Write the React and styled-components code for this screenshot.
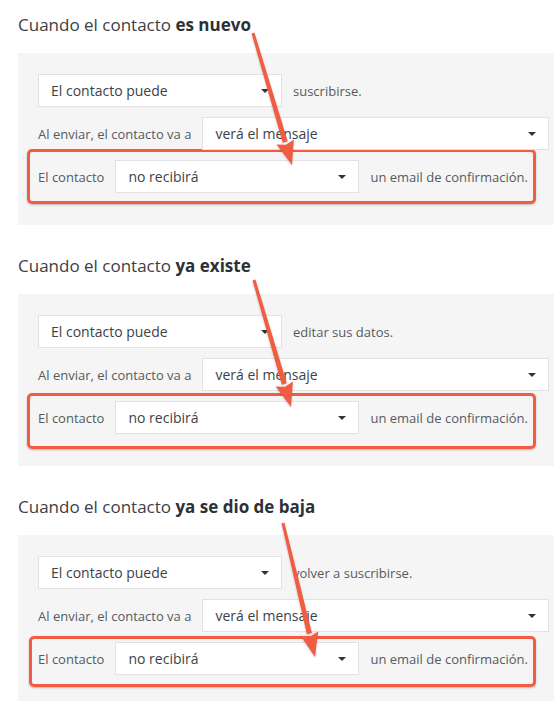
import styled, { createGlobalStyle } from "styled-components";

const GlobalStyle = createGlobalStyle`
  body {
    margin: 0;
    background: #fff;
    font-family: "Open Sans", "Liberation Sans", sans-serif;
  }
`;

const Page = styled.div`
  padding-top: 14px;
  width: 554px;
  overflow: hidden;
`;

const Section = styled.section`
  position: relative;
  margin-bottom: 30px;
`;

const Heading = styled.h3`
  margin: 0 0 17px 18px;
  font-size: 17px;
  line-height: 22px;
  font-weight: 400;
  color: #3b4046;
  & b {
    font-weight: 700;
    color: #2c3136;
  }
`;

const Panel = styled.div`
  margin-left: 18px;
  height: 172px;
  box-sizing: border-box;
  background: #f5f5f5;
  padding: 21px 0 0 20px;
  display: flex;
  flex-direction: column;
  gap: 10px;
`;

const Row = styled.div`
  display: flex;
  align-items: center;
  gap: 11px;
  font-size: 13px;
  color: #555a5f;
`;

const Highlight = styled.div`
  align-self: flex-start;
  border: 3px solid #f25c42;
  border-radius: 5px;
  box-shadow: 0 1px 2px rgba(0, 0, 0, 0.25);
  margin: ${(p) => -p.$top}px -8px ${(p) => -p.$bottom}px ${(p) => -p.$left}px;
  padding: ${(p) => p.$top - 3}px 5px ${(p) => p.$bottom - 3}px
    ${(p) => p.$left - 3}px;
`;

const Select = styled.div`
  position: relative;
  width: ${(p) => p.$width}px;
  height: 33px;
  box-sizing: border-box;
  background: #fff;
  border: 1px solid #e2e2e2;
  padding: 0 28px 0 12px;
  display: flex;
  align-items: center;
  font-size: 14px;
  color: #3d4247;
  &::after {
    content: "";
    position: absolute;
    right: 12px;
    top: 14px;
    border-left: 4px solid transparent;
    border-right: 4px solid transparent;
    border-top: 4px solid #333;
  }
`;

const ArrowLayer = styled.svg`
  position: absolute;
  left: 0;
  top: 0;
  width: 554px;
  height: 200px;
  pointer-events: none;
  overflow: visible;
  filter: drop-shadow(0 1px 1px rgba(0, 0, 0, 0.2));
`;

const Arrow = ({ x1, y1, x2, y2 }) => {
  const dx = x2 - x1;
  const dy = y2 - y1;
  const len = Math.hypot(dx, dy);
  const ux = dx / len;
  const uy = dy / len;
  const nx = -uy;
  const ny = ux;
  const headLen = 24;
  const headW = 9;
  const bx = x2 - ux * headLen;
  const by = y2 - uy * headLen;
  const shaft = [
    [x1 + nx * 1.5, y1 + ny * 1.5],
    [bx + nx * 2.6, by + ny * 2.6],
    [bx - nx * 2.6, by - ny * 2.6],
    [x1 - nx * 1.5, y1 - ny * 1.5],
  ];
  const head = [
    [x2, y2],
    [bx + nx * headW, by + ny * headW],
    [bx + ux * 3, by + uy * 3],
    [bx - nx * headW, by - ny * headW],
  ];
  const pts = (a) => a.map((p) => p.join(",")).join(" ");
  return (
    <g fill="#f25c42">
      <polygon points={pts(shaft)} />
      <polygon points={pts(head)} />
    </g>
  );
};

const sections = [
  {
    bold: "es nuevo",
    action: "suscribirse.",
    box: { top: 11, bottom: 11, left: 11 },
    arrow: { x1: 253, y1: 19, x2: 292, y2: 151 },
  },
  {
    bold: "ya existe",
    action: "editar sus datos.",
    box: { top: 8, bottom: 15, left: 11 },
    arrow: { x1: 254, y1: 25, x2: 291, y2: 152 },
  },
  {
    bold: "ya se dio de baja",
    action: "volver a suscribirse.",
    box: { top: 6, bottom: 12, left: 9 },
    arrow: { x1: 283, y1: 27, x2: 315, y2: 161 },
  },
];

export default function App() {
  return (
    <Page>
      <GlobalStyle />
      {sections.map((s) => (
        <Section key={s.bold}>
          <Heading>
            Cuando el contacto <b>{s.bold}</b>
          </Heading>
          <Panel>
            <Row>
              <Select $width={244}>El contacto puede</Select>
              {s.action}
            </Row>
            <Row>
              Al enviar, el contacto va a
              <Select $width={347}>verá el mensaje</Select>
            </Row>
            <Highlight $top={s.box.top} $bottom={s.box.bottom} $left={s.box.left}>
              <Row>
                El contacto
                <Select $width={244}>no recibirá</Select>
                un email de confirmación.
              </Row>
            </Highlight>
          </Panel>
          <ArrowLayer>
            <Arrow {...s.arrow} />
          </ArrowLayer>
        </Section>
      ))}
    </Page>
  );
}
